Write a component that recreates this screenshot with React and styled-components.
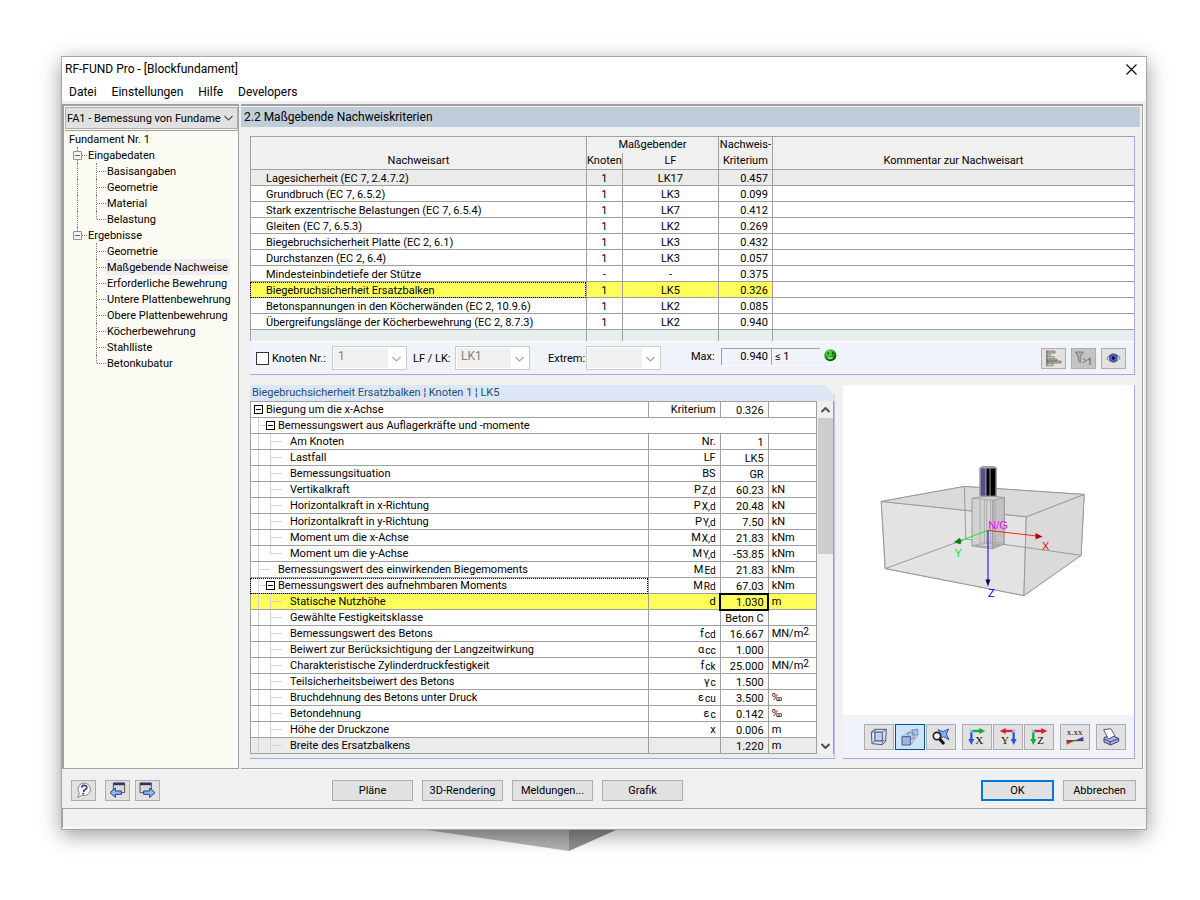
import React, { useState } from "react";
import styled, { createGlobalStyle } from "styled-components";

const GlobalStyle = createGlobalStyle`
  * {
    box-sizing: border-box;
  }

  body {
    margin: 0;
    background-color: #ffffff;
    color: #000000;
    font-family: Roboto, "Liberation Sans", Arial, sans-serif;
    font-size: 11px;
  }

  button, select, input {
    font: inherit;
    color: inherit;
    margin: 0;
    padding: 0;
  }
`;

const Page = styled.div`
  padding: 56px 53px 24px 61px;
`;

const Window = styled.div`
  position: relative;
  z-index: 1;
  background-color: #f0f0f0;
  border: 1px solid #a6a6a6;
  box-shadow: 0 5px 20px rgba(0, 0, 0, 0.4);
`;

const Shape = styled.svg`
  display: block;
  margin-left: 366px;
`;

const TitleBar = styled.header`
  display: flex;
  align-items: center;
  justify-content: space-between;
  height: 24px;
  padding: 0 9px 0 3px;
  background-color: #ffffff;
  font-size: 12px;
`;

const CloseButton = styled.button`
  display: flex;
  border: none;
  background: none;
`;

const MenuBar = styled.nav`
  display: flex;
  gap: 15px;
  height: 20px;
  padding: 0 7px;
  background-color: #ffffff;
  font-size: 12px;
  line-height: 22px;
`;

const MenuLink = styled.a`
  color: #000000;
  text-decoration: none;
`;

const Body = styled.div`
  display: flex;
  margin-top: 3px;
`;

const Sidebar = styled.aside`
  display: flex;
  flex-direction: column;
  width: 177px;
  flex: none;
  padding: 1px 0 0 1px;
  border: 1px solid #a0a0a0;
  border-width: 2px 1px 1px 2px;
  background-color: #fbfbf3;
`;

const CaseSelect = styled.div`
  position: relative;
  display: flex;
  height: 22px;
  border: 1px solid #adadad;
  background-color: #e1e1e1;

  select {
    flex: 1;
    min-width: 0;
    padding-left: 1px;
    appearance: none;
    border: none;
    background: none;
  }

  svg {
    align-self: center;
    margin-right: 4px;
  }
`;

const Tree = styled.ul`
  flex: 1;
  margin: 1px 0 0;
  padding: 0 0 0 3px;
  border-top: 1px solid #a0a0a0;
  list-style: none;
  line-height: 18px;
  white-space: nowrap;

  ul {
    margin: 0;
    padding: 0;
    list-style: none;
  }
`;

const TreeRow = styled.div`
  display: flex;
  align-items: center;
  height: 16px;
`;

const Guide = styled.span`
  position: relative;
  align-self: stretch;
  flex: none;
  width: 19px;

  &::before {
    content: "";
    position: absolute;
    left: 9px;
    top: 0;
    height: ${p => (p.$end ? "8px" : "16px")};
    border-left: ${p => (p.$pipe ? "1px dotted #808080" : "none")};
  }

  &::after {
    content: "";
    position: absolute;
    left: 10px;
    right: 0;
    top: 8px;
    border-top: ${p => (p.$arm ? "1px dotted #808080" : "none")};
  }
`;

const Expander = styled.button`
  position: absolute;
  z-index: 1;
  left: 5px;
  top: 4px;
  width: 9px;
  height: 9px;
  border: 1px solid #919191;
  border-radius: 1px;
  background: linear-gradient(#4b63a7, #4b63a7) center / 5px 1px no-repeat #f4f4f4;
`;

const TreeLabel = styled.span`
  height: 16px;
  padding: 0 2px 0 1px;
  background-color: ${p => (p.$active ? "#eeeef0" : "transparent")};
`;

const Main = styled.main`
  flex: 1;
  min-width: 0;
  margin: 0 3px 0 2px;
  border-top: 2px solid #a0a0a0;
  border-right: 1px solid #a0a0a0;
  border-bottom: 1px solid #a0a0a0;
  padding: 1px 2px 0 0;
  box-shadow: 1px 1px 0 #ffffff;
`;

const Heading = styled.h1`
  margin: 0;
  padding-left: 3px;
  height: 20px;
  background-color: #bfccd9;
  font-size: 12px;
  font-weight: normal;
  line-height: 20px;
`;

const Content = styled.div`
  padding: 9px 5px 9px 9px;
`;

const Panel = styled.section`
  display: flex;
  flex-direction: column;
  min-width: 0;
  background-color: ${p => p.$bg || "#f0f3f9"};
  border-right: 1px solid #a8a8e8;
  border-bottom: 1px solid #a8a8e8;
`;

const DetailPanel = styled(Panel)`
  clip-path: polygon(0 0, calc(100% - 10px) 0, 100% 10px, 100% 100%, 0 100%);
`;

const CriteriaTable = styled.table`
  width: 100%;
  table-layout: fixed;
  border-collapse: separate;
  border-spacing: 0;
  border-top: 1px solid #a0a0a0;
  border-bottom: 1px solid #ffffff;
  background-color: #ffffff;

  th {
    padding: 0;
    height: 16px;
    background-color: #f0f0f0;
    font-weight: normal;
    line-height: 15px;
    vertical-align: top;
    border-left: 1px solid #a0a0a0;
  }

  thead tr:last-child th {
    height: 17px;
    border-bottom: 1px solid #a0a0a0;
  }
`;

const BottomHead = styled.th`
  border-bottom: 1px solid #a0a0a0;

  &::before {
    content: "";
    display: block;
    height: 16px;
  }
`;

const CriteriaRow = styled.tr`
  background-color: ${p =>
    p.$state === "active"
      ? "#ffff5a"
      : p.$state === "first"
      ? "#ebebeb"
      : p.$state === "empty"
      ? "#e8eeee"
      : "#ffffff"};

  td:last-child {
    background-color: ${p => (p.$state === "active" ? "#ffffff" : "")};
  }
`;

const Cell = styled.td`
  height: ${p => (p.$last ? "11px" : "16px")};
  padding: 0 4px;
  border-left: 1px solid #a0a0a0;
  border-bottom: ${p => (p.$last ? "none" : "1px solid #a0a0a0")};
  line-height: 15px;
  text-align: ${p => p.$align || "left"};
  white-space: nowrap;
`;

const NameCell = styled(Cell)`
  padding-left: 15px;
  outline: ${p => (p.$focus ? "1px dotted #000000" : "none")};
  outline-offset: -1px;
`;

const Text = styled.div`
  height: 15px;
  line-height: 17px;
`;

const FilterBar = styled.div`
  display: flex;
  align-items: center;
  height: 32px;
  padding: 0 8px 0 6px;
`;

const CheckLabel = styled.label`
  display: flex;
  align-items: center;
  gap: 3px;
  width: 76px;
`;

const CheckBox = styled.input`
  appearance: none;
  width: 13px;
  height: 13px;
  border: 1px solid #333333;
  background-color: #ffffff;
`;

const SelectLabel = styled.label`
  display: flex;
  align-items: center;
  justify-content: space-between;
  width: ${p => p.$width};
  margin-right: ${p => p.$after || "0"};
`;

const FlatSelect = styled.span`
  display: flex;
  align-items: center;
  width: 75px;
  height: 24px;
  padding: 1px;
  border: 1px solid #cccccc;
  background-color: #ffffff;

  select {
    align-self: stretch;
    width: 54px;
    padding: 0 0 4px 4px;
    appearance: none;
    border: none;
    border-radius: 0;
    background-color: #f0f0f0;
    color: #838383;
    font-size: 12px;
    opacity: 1;
  }

  svg {
    margin: 2px auto 0;
  }
`;

const MaxGroup = styled.div`
  display: flex;
  align-items: center;
  align-self: flex-start;
  height: 28px;
  margin-left: 30px;
`;

const MaxText = styled.span`
  width: 30px;
`;

const MaxField = styled.output`
  width: ${p => p.$width};
  height: 17px;
  padding: 0 3px;
  border: 1px solid #a0a0a0;
  border-width: 1px 0 0 1px;
  box-shadow: 0 1px 0 #ffffff;
  line-height: 16px;
  text-align: ${p => p.$align || "left"};
`;

const Face = styled.svg`
  margin: 0 auto 2px 4px;
`;

const IconGroup = styled.div`
  display: flex;
  gap: ${p => p.$gap || "0"};
  margin-left: ${p => (p.$push ? "auto" : "0")};
`;

const IconButton = styled.button`
  display: flex;
  align-items: center;
  justify-content: center;
  width: ${p => (p.$wide ? "30px" : "25px")};
  height: ${p => (p.$wide ? "26px" : "21px")};
  border: 1px solid ${p => (p.$active ? "#005499" : "#adadad")};
  background-color: ${p =>
    p.$active ? "#cce4f7" : p.disabled ? "#c4c4c4" : "#e1e1e1"};
`;

const Split = styled.div`
  display: grid;
  grid-template-columns: minmax(0, 2fr) minmax(0, 1fr);
  gap: 8px;
  margin-top: 10px;
`;

const DetailHeading = styled.h2`
  margin: 0 -1px 0 0;
  padding-left: 2px;
  height: 16px;
  background-color: #dce6f4;
  color: #1f4e79;
  font-size: 11px;
  font-weight: normal;
  line-height: 16px;
`;

const DetailBody = styled.div`
  display: flex;
  padding-bottom: 4px;
`;

const DetailTable = styled.table`
  flex: 1;
  min-width: 0;
  table-layout: fixed;
  border-collapse: separate;
  border-spacing: 0;
  border-top: 1px solid #a0a0a0;
  border-right: 1px solid #a0a0a0;
  background-color: #ffffff;
`;

const DetailRow = styled.tr`
  background-color: ${p =>
    p.$active ? "#ffff5a" : p.$last ? "#ebebeb" : "#ffffff"};
`;

const DetailName = styled(Cell)`
  padding: 0 0 0 1px;
  outline: ${p => (p.$focus ? "1px dotted #000000" : "none")};
  outline-offset: -1px;
`;

const NameLine = styled.div`
  display: flex;
  height: 15px;
`;

const Branch = styled.span`
  position: relative;
  flex: none;
  width: 12px;

  &::before {
    content: "";
    position: absolute;
    left: 6px;
    top: 0;
    height: ${p => (p.$end ? "8px" : "15px")};
    border-left: ${p => (p.$pipe ? "1px solid #d4d4d4" : "none")};
  }

  &::after {
    content: "";
    position: absolute;
    left: 6px;
    width: 12px;
    top: 7px;
    border-top: ${p => (p.$arm ? "1px solid #d4d4d4" : "none")};
  }
`;

const Slot = styled.span`
  position: relative;
  z-index: 1;
  display: flex;
  align-items: center;
  flex: none;
  width: 14px;
  padding-left: 2px;
`;

const Toggle = styled.button`
  width: 9px;
  height: 9px;
  border: 1px solid #000000;
  background: linear-gradient(#000000, #000000) center / 5px 1px no-repeat #ffffff;
`;

const SymbolCell = styled(Cell)`
  text-align: right;

  sub {
    margin-left: 1px;
    font-size: 10px;
    line-height: 10px;
    vertical-align: -1px;
  }
`;

const ValueCell = styled(Cell)`
  text-align: right;
  outline: ${p => (p.$edit ? "2px solid #000000" : "none")};
  outline-offset: -1px;
`;

const UnitCell = styled(Cell)`
  padding: 0 0 0 3px;

  sup {
    font-size: 10px;
    line-height: 10px;
    vertical-align: 2px;
  }
`;

const ScrollBar = styled.div`
  display: flex;
  flex-direction: column;
  width: 16px;
  margin-left: 1px;
  background-color: #f0f0f0;
  border-right: 1px solid #a0a0a0;
`;

const ScrollButton = styled.button`
  display: flex;
  align-items: center;
  justify-content: center;
  height: 17px;
  border: none;
  background: none;
`;

const Thumb = styled.div`
  height: 136px;
  margin-bottom: auto;
  background-color: #cdcdcd;
`;

const Viewer = styled.div`
  flex: 1;
  display: flex;
  background-color: #ffffff;

  svg {
    width: 100%;
    height: 330px;
  }
`;

const ViewerTools = styled.div`
  display: flex;
  flex-wrap: wrap;
  justify-content: flex-end;
  align-items: center;
  gap: 6px;
  height: 43px;
  padding-right: 8px;
`;

const Footer = styled.footer`
  display: flex;
  align-items: center;
  gap: 9px;
  height: 37px;
  margin-top: 2px;
  padding: 2px 10px 0 9px;
`;

const Middle = styled.div`
  display: flex;
  gap: 9px;
  margin: 0 auto 0 163px;
`;

const PushButton = styled.button`
  width: ${p => (p.$narrow ? "73px" : "81px")};
  height: 21px;
  border: ${p => (p.$primary ? "2px solid #0078d7" : "1px solid #adadad")};
  background-color: #e1e1e1;
  line-height: 16px;
`;

const StatusBar = styled.div`
  height: 20px;
  margin-bottom: 1px;
  border-top: 1px solid #a0a0a0;
  border-left: 1px solid #a0a0a0;
  border-bottom: 1px solid #ffffff;
`;

const tree = [
  {
    label: "Eingabedaten",
    items: ["Basisangaben", "Geometrie", "Material", "Belastung"],
  },
  {
    label: "Ergebnisse",
    items: [
      "Geometrie",
      "Maßgebende Nachweise",
      "Erforderliche Bewehrung",
      "Untere Plattenbewehrung",
      "Obere Plattenbewehrung",
      "Köcherbewehrung",
      "Stahlliste",
      "Betonkubatur",
    ],
  },
];

const criteria = [
  ["Lagesicherheit (EC 7, 2.4.7.2)", "1", "LK17", "0.457"],
  ["Grundbruch (EC 7, 6.5.2)", "1", "LK3", "0.099"],
  ["Stark exzentrische Belastungen (EC 7, 6.5.4)", "1", "LK7", "0.412"],
  ["Gleiten (EC 7, 6.5.3)", "1", "LK2", "0.269"],
  ["Biegebruchsicherheit Platte (EC 2, 6.1)", "1", "LK3", "0.432"],
  ["Durchstanzen (EC 2, 6.4)", "1", "LK3", "0.057"],
  ["Mindesteinbindetiefe der Stütze", "-", "-", "0.375"],
  ["Biegebruchsicherheit Ersatzbalken", "1", "LK5", "0.326"],
  ["Betonspannungen in den Köcherwänden (EC 2, 10.9.6)", "1", "LK2", "0.085"],
  ["Übergreifungslänge der Köcherbewehrung (EC 2, 8.7.3)", "1", "LK2", "0.940"],
];

const mn = (
  <>
    MN/m<sup>2</sup>
  </>
);

const details = [
  { level: 0, open: true, name: "Biegung um die x-Achse", sym: "Kriterium", value: "0.326" },
  { level: 1, open: true, name: "Bemessungswert aus Auflagerkräfte und -momente", wide: true },
  { level: 2, name: "Am Knoten", sym: "Nr.", value: "1" },
  { level: 2, name: "Lastfall", sym: "LF", value: "LK5" },
  { level: 2, name: "Bemessungsituation", sym: "BS", value: "GR" },
  { level: 2, name: "Vertikalkraft", sym: "P", sub: "Z,d", value: "60.23", unit: "kN" },
  { level: 2, name: "Horizontalkraft in x-Richtung", sym: "P", sub: "X,d", value: "20.48", unit: "kN" },
  { level: 2, name: "Horizontalkraft in y-Richtung", sym: "P", sub: "Y,d", value: "7.50", unit: "kN" },
  { level: 2, name: "Moment um die x-Achse", sym: "M", sub: "X,d", value: "21.83", unit: "kNm" },
  { level: 2, end: true, name: "Moment um die y-Achse", sym: "M", sub: "Y,d", value: "-53.85", unit: "kNm" },
  { level: 1, name: "Bemessungswert des einwirkenden Biegemoments", sym: "M", sub: "Ed", value: "21.83", unit: "kNm" },
  { level: 1, open: true, focus: true, name: "Bemessungswert des aufnehmbaren Moments", sym: "M", sub: "Rd", value: "67.03", unit: "kNm" },
  { level: 2, active: true, name: "Statische Nutzhöhe", sym: "d", value: "1.030", unit: "m" },
  { level: 2, name: "Gewählte Festigkeitsklasse", value: "Beton C" },
  { level: 2, name: "Bemessungswert des Betons", sym: "f", sub: "cd", value: "16.667", unit: mn },
  { level: 2, name: "Beiwert zur Berücksichtigung der Langzeitwirkung", sym: "α", sub: "cc", value: "1.000" },
  { level: 2, name: "Charakteristische Zylinderdruckfestigkeit", sym: "f", sub: "ck", value: "25.000", unit: mn },
  { level: 2, name: "Teilsicherheitsbeiwert des Betons", sym: "γ", sub: "c", value: "1.500" },
  { level: 2, name: "Bruchdehnung des Betons unter Druck", sym: "ε", sub: "cu", value: "3.500", unit: "‰" },
  { level: 2, name: "Betondehnung", sym: "ε", sub: "c", value: "0.142", unit: "‰" },
  { level: 2, name: "Höhe der Druckzone", sym: "x", value: "0.006", unit: "m" },
  { level: 2, name: "Breite des Ersatzbalkens", value: "1.220", unit: "m" },
];

const Chevron = ({ up, color = "#505050", bold }) => (
  <svg width="9" height="6" viewBox="0 0 9 6">
    <path
      d={up ? "M0.5 5 4.5 1 8.5 5" : "M0.5 1 4.5 5 8.5 1"}
      fill="none"
      stroke={color}
      strokeWidth={bold ? 2 : 1.1}
    />
  </svg>
);

const Smiley = () => (
  <Face width="13" height="13" viewBox="0 0 39 39" role="img" aria-label="Nachweis erfüllt">
    <defs>
      <radialGradient id="ball" cx=".4" cy=".3" r=".7">
        <stop offset="0" stopColor="#7bea5c" />
        <stop offset=".6" stopColor="#1f9a1c" />
        <stop offset="1" stopColor="#064a08" />
      </radialGradient>
    </defs>
    <circle cx="19" cy="19" r="18" fill="url(#ball)" />
    <circle cx="13" cy="13" r="3" fill="#073b07" />
    <circle cx="26" cy="13" r="3" fill="#073b07" />
    <path d="M10 23q9 5 18 0-2 7-9 7t-9-7z" fill="#d8f8c8" />
  </Face>
);

const BarsIcon = () => (
  <svg width="18" height="17" viewBox="0 0 54 51">
    <path d="M6 3h24v6H6zM6 27h30v6H6zM6 33h42v6H6z" fill="#f2b5b5" stroke="#555" strokeWidth="2" />
    <path d="M6 13h10v6H6zM6 20h22v6H6zM6 41h18v6H6z" fill="#c5ecd0" stroke="#4c7a5a" strokeWidth="2" />
    <path d="M5 1v48" stroke="#555" strokeWidth="2" />
  </svg>
);

const FilterIcon = () => (
  <svg width="19" height="17" viewBox="0 0 57 51">
    <path d="M4 6h24L19 20v18l-6-5V20z" fill="#b0b0b0" stroke="#7b7b7b" strokeWidth="3" />
    <path d="m26 26 12 6-12 6" fill="none" stroke="#777" strokeWidth="3" />
    <path d="m41 30 7-5v20" fill="none" stroke="#777" strokeWidth="4" />
  </svg>
);

const EyeIcon = () => (
  <svg width="15" height="13" viewBox="0 0 45 39">
    <path d="M2 20Q22-4 43 18 24 42 2 20z" fill="#e8e8e8" stroke="#888" strokeWidth="3" />
    <circle cx="22" cy="18" r="12" fill="#4a63cf" stroke="#27317e" strokeWidth="2" />
    <circle cx="22" cy="18" r="5" fill="#0a0a28" />
    <path d="M4 16Q22-4 41 15" fill="none" stroke="#555" strokeWidth="2" />
  </svg>
);

const CubeIcon = () => (
  <svg width="18" height="18" viewBox="0 0 54 54">
    <path d="M4 12 14 4h35l-2 36-10 10-31-3z" fill="#dbe3f2" stroke="#4b5876" strokeWidth="3" />
    <path d="M14 13h24v27H14z" fill="#c3cfe4" stroke="#5c6d92" strokeWidth="2" />
    <path d="M4 12h33v38M37 12 49 4M15 4v34h32M15 38 6 47" fill="none" stroke="#5c6d92" strokeWidth="3" />
  </svg>
);

const BoxesIcon = () => (
  <svg width="18" height="18" viewBox="0 0 54 54">
    <path d="M3 26 34 5l17-2v17L30 50z" fill="#cad8ee" stroke="#7c8eb5" strokeWidth="2" />
    <path d="M34 6h15v15H34zM20 14h19v19H20z" fill="#b4c6e4" stroke="#647aa8" strokeWidth="2" />
    <path d="M3 26h25v25H3z" fill="#9fb5da" stroke="#435c90" strokeWidth="3" />
  </svg>
);

const SearchIcon = () => (
  <svg width="18" height="18" viewBox="0 0 54 54">
    <path d="m18 5 15 6L50 3l-7 15 8 17-16-9-13 7 5-14z" fill="#83aef0" stroke="#2757b8" strokeWidth="3" />
    <circle cx="15" cy="24" r="11" fill="#ffffff" fillOpacity=".7" stroke="#222" strokeWidth="5" />
    <path d="m23 33 13 15" stroke="#111" strokeWidth="9" />
  </svg>
);

// coordinate system view along one of the axes
const AxisIcon = ({ label, across, down, flip }) => (
  <svg width="18" height="18" viewBox="0 0 54 54">
    <g transform={flip ? "matrix(-1 0 0 1 54 0)" : undefined} strokeWidth="7" fill="none">
      <path d="M10 9h28" stroke={across} />
      <path d="m34 0 18 9-18 9z" fill={across} />
      <path d="M10 12v24" stroke={down} />
      <path d="M1 33h18l-9 18z" fill={down} />
      <circle cx="9" cy="9" r="5" fill="#80d8e8" />
    </g>
    <text x={flip ? 6 : 22} y="48" fontFamily="Liberation Serif, serif" fontSize="33" fill="#111">
      {label}
    </text>
  </svg>
);

const ValuesIcon = () => (
  <svg width="20" height="20" viewBox="0 0 60 60">
    <text x="5" y="24" fontFamily="Liberation Serif, serif" fontSize="27" fill="#111">
      x.xx
    </text>
    <path d="M5 42v11l22-11z" fill="#d42a2a" />
    <path d="M55 40V29L31 40z" fill="#3245c8" />
    <path d="M4 41h52" stroke="#333" strokeWidth="3" />
  </svg>
);

const PrinterIcon = () => (
  <svg width="18" height="18" viewBox="0 0 54 54">
    <path d="m6 29 20-8 24 10v9L26 51 6 42z" fill="#aab1e8" stroke="#3b3f72" strokeWidth="3" />
    <path d="M5 5 26 2l13 21-20 10z" fill="#ffffff" stroke="#555b80" strokeWidth="3" />
    <path d="m7 33 17 9 25-10M24 42v8" fill="none" stroke="#3b3f72" strokeWidth="3" />
  </svg>
);

const HelpIcon = () => (
  <svg width="16" height="17" viewBox="0 0 48 51">
    <path d="M24 3a20 19 0 1 1-7 37L5 47l5-13A19 19 0 0 1 24 3z" fill="#f8f8f8" stroke="#888" strokeWidth="3" />
    <path d="M17 17q1-8 9-7 8 1 6 8-1 4-8 7l-1 5" fill="none" stroke="#2c3f91" strokeWidth="5" />
    <circle cx="22" cy="35" r="3" fill="#2c3f91" />
  </svg>
);

const PageIcon = ({ forward }) => (
  <svg width="17" height="17" viewBox="0 0 51 51">
    <path d={forward ? "M3 3h34v29H3z" : "M13 3h34v29H13z"} fill="#d8d8d8" stroke="#555" strokeWidth="3" />
    <path d={forward ? "M3 6h34" : "M13 6h34"} stroke="#2a3372" strokeWidth="7" />
    <path
      d={forward ? "M14 27h18v-9l16 14-16 14v-9H14z" : "M37 27H19v-9L3 32l16 14v-9h18z"}
      fill="#8fb8f4"
      stroke="#1b3c8c"
      strokeWidth="3"
    />
  </svg>
);

const Foundation = () => (
  <svg viewBox="-54 -165 876 990" role="img" aria-label="3D-Ansicht des Blockfundaments">
    <g stroke="#9b9b9b" strokeWidth="3" strokeLinejoin="round">
      <path d="M61 184 311 139 671 163 662 346 490 467 73 386z" fill="#dedede" />
      <path d="M61 184 497 230 490 467 73 386z" fill="#e5e5e5" fillOpacity=".7" />
      <path d="M497 230 671 163 662 346 490 467z" fill="#dadada" />
      <path d="M61 184 311 139 671 163 497 230z" fill="#dadada" />
      <path d="M311 139 315 297 73 386M315 297 662 346" fill="none" />
      <path d="M334 175 382 167 431 172 430 312 395 326 334 318z" fill="#d2d2d2" />
      <path d="M397 180 431 172 430 312 395 326z" fill="#c2c2c2" />
      <path
        d="M334 175 397 180M334 318 380 304 430 310M358 176v132M371 178v132M378 178v132M390 178v132M404 178v140M397 180v146M345 318 375 310 418 313 395 320z"
        fill="none"
        strokeWidth="2"
      />
      <path d="M358 83h18v85h-18z" fill="#4f4f91" />
      <path d="M376 83h30v85h-30z" fill="#000000" />
      <path d="M388 83v85" />
      <path d="M358 83 366 79h34l7 4v85M358 83h48M358 83v85" fill="none" />
    </g>
    <path d="M382 271 530 288" stroke="#ff2020" strokeWidth="3" />
    <path d="m525 279 21 11-21 8z" fill="#b00000" />
    <path d="M382 271 295 303" stroke="#10f010" strokeWidth="3" />
    <path d="m279 307 17-13 7 8-4 11z" fill="#0a7d0a" />
    <path d="M382 271v150" stroke="#0000f0" strokeWidth="3" />
    <path d="m374 419 15 0-7 21z" fill="#000070" />
    <g fontFamily="Liberation Sans, sans-serif" fontSize="33">
      <text x="383" y="266" fill="#ff00ff">N/G</text>
      <text x="544" y="329" fill="#ff0000">X</text>
      <text x="281" y="350" fill="#00ee00">Y</text>
      <text x="382" y="471" fill="#0000ff">Z</text>
    </g>
  </svg>
);

const Navigator = ({ active, onSelect }) => (
  <Tree>
    <li>
      <TreeRow>
        <TreeLabel>Fundament Nr. 1</TreeLabel>
      </TreeRow>
      <ul>
        {tree.map((group, g) => (
          <li key={group.label}>
            <TreeRow>
              <Guide $pipe $arm $end={g === tree.length - 1}>
                <Expander aria-label={group.label} />
              </Guide>
              <TreeLabel>{group.label}</TreeLabel>
            </TreeRow>
            <ul>
              {group.items.map((item, i) => (
                <li key={item}>
                  <TreeRow onClick={() => onSelect(`${g}-${i}`)}>
                    <Guide $pipe={g < tree.length - 1} />
                    <Guide $pipe $arm $end={i === group.items.length - 1} />
                    <TreeLabel $active={active === `${g}-${i}`}>{item}</TreeLabel>
                  </TreeRow>
                </li>
              ))}
            </ul>
          </li>
        ))}
      </ul>
    </li>
  </Tree>
);

const Criteria = () => (
  <CriteriaTable>
    <colgroup>
      <col style={{ width: "38%" }} />
      <col width="36" />
      <col width="96" />
      <col width="54" />
      <col />
    </colgroup>
    <thead>
      <tr>
        <BottomHead rowSpan="2">Nachweisart</BottomHead>
        <th colSpan="2">Maßgebender</th>
        <th>Nachweis-</th>
        <BottomHead rowSpan="2">Kommentar zur Nachweisart</BottomHead>
      </tr>
      <tr>
        <th>Knoten</th>
        <th>LF</th>
        <th>Kriterium</th>
      </tr>
    </thead>
    <tbody>
      {criteria.map(([name, node, lf, value], i) => (
        <CriteriaRow key={name} $state={i === 7 ? "active" : i === 0 ? "first" : ""}>
          <NameCell $focus={i === 7}>
            <Text>{name}</Text>
          </NameCell>
          <Cell $align="center">
            <Text>{node}</Text>
          </Cell>
          <Cell $align="center">
            <Text>{lf}</Text>
          </Cell>
          <Cell $align="right">
            <Text>{value}</Text>
          </Cell>
          <Cell />
        </CriteriaRow>
      ))}
      <CriteriaRow $state="empty">
        <Cell $last />
        <Cell $last />
        <Cell $last />
        <Cell $last />
        <Cell $last />
      </CriteriaRow>
    </tbody>
  </CriteriaTable>
);

const DisabledSelect = ({ label, value, width, after }) => (
  <SelectLabel $width={width} $after={after}>
    {label}
    <FlatSelect>
      <select disabled aria-label={label || "Knoten"}>
        <option>{value}</option>
      </select>
      <Chevron color="#a6a6a6" />
    </FlatSelect>
  </SelectLabel>
);

const Details = () => (
  <DetailTable>
    <colgroup>
      <col />
      <col width="72" />
      <col width="48" />
      <col width="48" />
    </colgroup>
    <tbody>
      {details.map((row, i) => (
        <DetailRow key={row.name} $active={row.active} $last={i === details.length - 1}>
          <DetailName $focus={row.focus} colSpan={row.wide ? 4 : 1}>
            <NameLine>
              {row.level > 0 && <Branch $pipe $arm={row.level === 1} />}
              {row.level > 1 && <Branch $pipe $arm $end={row.end} />}
              <Slot>{row.open && <Toggle aria-label={row.name} />}</Slot>
              {row.name}
            </NameLine>
          </DetailName>
          {!row.wide && (
            <>
              <SymbolCell>
                {row.sym}
                {row.sub && <sub>{row.sub}</sub>}
              </SymbolCell>
              <ValueCell $edit={row.active}>
                <Text>{row.value}</Text>
              </ValueCell>
              <UnitCell>{row.unit}</UnitCell>
            </>
          )}
        </DetailRow>
      ))}
    </tbody>
  </DetailTable>
);

const App = () => {
  const [active, setActive] = useState("1-1");

  return (
    <Page>
      <GlobalStyle />
      <Window>
        <TitleBar>
          RF-FUND Pro - [Blockfundament]
          <CloseButton aria-label="Schließen">
            <svg width="11" height="11" viewBox="0 0 11 11">
              <path d="M0.5 0.5 10.5 10.5M10.5 0.5 0.5 10.5" stroke="#000" strokeWidth="1.1" />
            </svg>
          </CloseButton>
        </TitleBar>
        <MenuBar>
          {["Datei", "Einstellungen", "Hilfe", "Developers"].map(item => (
            <MenuLink href="#" key={item}>
              {item}
            </MenuLink>
          ))}
        </MenuBar>
        <Body>
          <Sidebar>
            <CaseSelect>
              <select aria-label="Bemessungsfall">
                <option>FA1 - Bemessung von Fundame</option>
              </select>
              <Chevron />
            </CaseSelect>
            <Navigator active={active} onSelect={setActive} />
          </Sidebar>
          <Main>
            <Heading>2.2 Maßgebende Nachweiskriterien</Heading>
            <Content>
              <Panel>
                <Criteria />
                <FilterBar>
                  <CheckLabel>
                    <CheckBox type="checkbox" />
                    Knoten Nr.:
                  </CheckLabel>
                  <DisabledSelect value="1" width="75px" after="6px" />
                  <DisabledSelect label="LF / LK:" value="LK1" width="117px" after="18px" />
                  <DisabledSelect label="Extrem:" value="" width="113px" />
                  <MaxGroup>
                    <MaxText>Max:</MaxText>
                    <MaxField $width="50px" $align="right">
                      0.940
                    </MaxField>
                    <MaxField $width="49px">≤ 1</MaxField>
                    <Smiley />
                  </MaxGroup>
                  <IconGroup $gap="5px" $push>
                    <IconButton aria-label="Balken">
                      <BarsIcon />
                    </IconButton>
                    <IconButton disabled aria-label="Filter">
                      <FilterIcon />
                    </IconButton>
                    <IconButton aria-label="Ansicht">
                      <EyeIcon />
                    </IconButton>
                  </IconGroup>
                </FilterBar>
              </Panel>
              <Split>
                <DetailPanel $bg="#e8eeee">
                  <DetailHeading>Biegebruchsicherheit Ersatzbalken ¦ Knoten 1 ¦ LK5</DetailHeading>
                  <DetailBody>
                    <Details />
                    <ScrollBar>
                      <ScrollButton aria-label="Nach oben">
                        <Chevron up bold />
                      </ScrollButton>
                      <Thumb />
                      <ScrollButton aria-label="Nach unten">
                        <Chevron bold />
                      </ScrollButton>
                    </ScrollBar>
                  </DetailBody>
                </DetailPanel>
                <Panel>
                  <Viewer>
                    <Foundation />
                  </Viewer>
                  <ViewerTools>
                    <IconGroup $gap="1px">
                      <IconButton $wide aria-label="Drahtmodell">
                        <CubeIcon />
                      </IconButton>
                      <IconButton $wide $active aria-label="Perspektive">
                        <BoxesIcon />
                      </IconButton>
                      <IconButton $wide aria-label="Alles zeigen">
                        <SearchIcon />
                      </IconButton>
                    </IconGroup>
                    <IconGroup $gap="1px">
                      <IconButton $wide aria-label="In X">
                        <AxisIcon label="X" across="#15a83c" down="#2d55dc" />
                      </IconButton>
                      <IconButton $wide aria-label="In Y">
                        <AxisIcon label="Y" across="#d8203c" down="#2d55dc" flip />
                      </IconButton>
                      <IconButton $wide aria-label="In Z">
                        <AxisIcon label="Z" across="#d8203c" down="#15a83c" />
                      </IconButton>
                    </IconGroup>
                    <IconButton $wide aria-label="Werte">
                      <ValuesIcon />
                    </IconButton>
                    <IconButton $wide aria-label="Drucken">
                      <PrinterIcon />
                    </IconButton>
                  </ViewerTools>
                </Panel>
              </Split>
            </Content>
          </Main>
        </Body>
        <Footer>
          <IconButton aria-label="Hilfe">
            <HelpIcon />
          </IconButton>
          <IconGroup $gap="5px">
            <IconButton aria-label="Zurück">
              <PageIcon />
            </IconButton>
            <IconButton aria-label="Weiter">
              <PageIcon forward />
            </IconButton>
          </IconGroup>
          <Middle>
            <PushButton>Pläne</PushButton>
            <PushButton>3D-Rendering</PushButton>
            <PushButton>Meldungen...</PushButton>
            <PushButton>Grafik</PushButton>
          </Middle>
          <PushButton $narrow $primary>
            OK
          </PushButton>
          <PushButton $narrow>Abbrechen</PushButton>
        </Footer>
        <StatusBar />
      </Window>
      <Shape width="190" height="21" viewBox="0 0 190 21">
        <path d="M0 0h142v21z" fill="#b3b3b3" />
        <path d="M142 0h47l-47 21z" fill="#8f8f8f" />
      </Shape>
    </Page>
  );
};

export default App;
